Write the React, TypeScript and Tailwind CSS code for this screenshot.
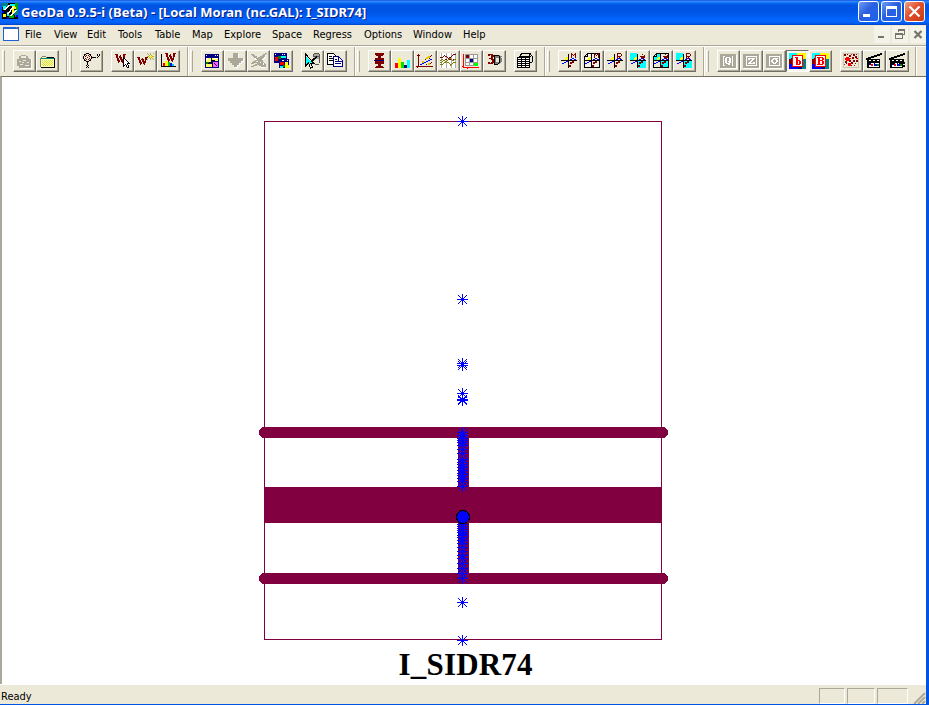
import React from "react";

type Shape = { d: string; c: string; w?: number };

/* Strokes and fills share the 23 x 22 grid of a toolbar button. */
function Ink({ d, c, w = 1 }: Shape) {
  return <path d={d} stroke={c} strokeWidth={w} fill="none" />;
}

function Fill({ d, c }: { d: string; c: string }) {
  return <path d={d} fill={c} />;
}

/* Draws a one-colour bitmap whose marked cells are "#". */
function Bits({ x, y, c, rows }: { x: number; y: number; c: string; rows: string[] }) {
  const d = rows
    .flatMap((row, j) => [...row].map((cell, i) => (cell === "#" ? `M${x + i} ${y + j}h1v1h-1z` : "")))
    .join("");
  return <path d={d} fill={c} />;
}

const MAROON = "#800000";
const NAVY = "#000080";
const GRAY = "#aca899";

const bigW = [
  "###.....###",
  ".##..#..##.",
  ".##.##..##.",
  ".##.###.##.",
  "..##.##.#..",
  "..##.####..",
  "..###.###..",
  "...##.##...",
  "...#...#...",
];

function Dots({ at, c, s = 1 }: { at: number[][]; c: string; s?: number }) {
  return (
    <>
      {at.map(([x, y]) => (
        <rect key={x + "-" + y} x={x} y={y} width={s} height={s} fill={c} />
      ))}
    </>
  );
}

function Axes({ cyan, page, letter }: { cyan?: boolean; page?: boolean; letter?: string }) {
  return (
    <>
      {page && <Fill c={cyan ? "#ece9d8" : "#f4f2e8"} d="M7 4h11v13H4V7z" />}
      {cyan && <Fill c="#0ff" d={page ? "M7 4h3v6H4V7zM11 11h7v6h-7z" : "M3 3h7v7H3zM11 11h8v7h-8z"} />}
      {page && <Bits x={3} y={3} c="#000" rows={[
        "...#############",
        "..##...........#",
        ".#.#...........#",
        "####...........#",
        "#..............#",
        "#..............#",
        "#..............#",
        "#..............#",
        "#..............#",
        "#..............#",
        "#..............#",
        "#..............#",
        "#..............#",
        "#..............#",
        "################",
      ]} />}
      <Fill c="#000" d="M3 10h16v1H3zM10 4h1v14h-1z" />
      <Fill c="#00f" d="M4 13h2v1H4zM6 12h2v1H6zM8 11h2v1H8zM12 9h2v1h-2zM14 8h2v1h-2zM16 9h2v1h-2z" />
      <Dots at={[[12, 12], [14, 11], [11, 15]]} c={MAROON} s={2} />
      <Dots at={[[8, 7], [7, 8]]} c="#ff0" s={2} />
      {letter === "M" && <Bits x={13} y={3} c={MAROON} rows={["#...#", "##.##", "#.#.#", "#...#", "#...#"]} />}
      {letter === "R" && <Bits x={13} y={3} c={MAROON} rows={["####.", "#...#", "#...#", "####.", "#.#..", "#..#."]} />}
      {!letter && (
        <>
          <Dots at={[[15, 4], [17, 5], [13, 6], [16, 8]]} c={MAROON} />
          <Dots at={[[14, 6], [16, 6]]} c={MAROON} s={2} />
        </>
      )}
    </>
  );
}

function Patches({ letter }: { letter: string }) {
  return (
    <>
      <Fill c="#0ff" d="M3 3h9v7H3z" />
      <Fill c="#ff0" d="M11 3h9v7h-4l-5-3z" />
      <Fill c="#008080" d="M15 9h5v10h-8z" />
      <Fill c="#00f" d="M3 14h9l2 5H3z" />
      <Fill c={MAROON} d="M3 9l4-1v6H3z" />
      <Fill c={NAVY} d="M12 16h4v3h-4z" />
      <rect x="6.5" y="5.5" width="10" height="11" fill="#fff" stroke="red" />
      {letter === "b" ? (
        <Bits x={9} y={7} c="red" rows={["###...", ".##...", ".##...", ".####.", ".##.##", ".##.##", ".##.##", ".####."]} />
      ) : (
        <Bits x={8} y={7} c="red" rows={["######.", ".##..##", ".##..##", ".#####.", ".##..##", ".##..##", ".##..##", "######."]} />
      )}
    </>
  );
}

function Clapper({ many }: { many?: boolean }) {
  return (
    <>
      <Fill c="#000" d="M3 8h2V7h3V6h3V5h3V4h3V3h2v2h-2v1h-3v1h-3v1H8v2H5V10H3zM4 9h13v9H4z" />
      <Fill c="#fff" d="M6 10h2v1H6zM10 10h2v1h-2zM14 10h2v1h-2zM6 13h10v4H6z" />
      <Fill c={NAVY} d="M6 13h2v2H6zM11 13h1v3h-1z" />
      <Dots at={[[8, 14]]} c="red" s={2} />
      <Dots at={[[12, 14]]} c="#00f" s={2} />
      <Dots at={[[14, 14]]} c="#008000" s={2} />
      {many && <Fill c="#000" d="M15 9h3v1h-3zM17 10h1v4h-1zM13 12h6v2h-6zM5 12h4v2H5zM16 15h3v2h-3z" />}
    </>
  );
}

const glyphs: Record<string, React.ReactNode> = {
  openGray: (
    <>
      <Fill c="#fff" d="M6 7h9v2h4v10H8l-3-4z" />
      <Fill c={GRAY} d="M8 5h5v1H8zM6 6h2v2H6zM13 6h2v2h-2zM4 9h2V8h10v1h2v9H6v-2H4z" />
      <Fill c="#ece9d8" d="M8 7h4v1H8zM6 11h2v1H6zM10 10h3v1h-3zM14 12h2v1h-2zM7 14h3v1H7zM12 15h4v1h-4zM9 12h2v1H9z" />
    </>
  ),
  folder: (
    <>
      <Fill c="#808080" d="M4 8h1v9H4zM5 7h1v1H5zM6 6h4v1H6zM10 7h1v1h-1z" />
      <Fill c="#ffff9c" d="M5 9h13v8H5zM6 7h4v2H6z" />
      <Bits x={6} y={10} c="#d8d860" rows={["#.#.#.#.#.#", ".#.#.#.#.#.", "#.#.#.#.#.#", ".#.#.#.#.#.", "#.#.#.#.#.#", ".#.#.#.#.#."]} />
      <Fill c="#008080" d="M5 8h13v1H5z" />
      <Fill c="#000" d="M11 7h7v1h-7zM18 8h1v10H5v-1h13z" />
    </>
  ),
  coordinate: (
    <>
      <Bits x={3} y={3} c="#000" rows={[
        "...###...........",
        ".##...##......#.#",
        ".#.....#......#.#",
        "#.......#......#.",
        "#...#...#####.#..",
        "#.......#........",
        ".#.....#.........",
        ".##...##.........",
        "...###...........",
        "....#............",
        "....#............",
        "....#............",
        "...#.#...........",
        "....#............",
        "...#.#...........",
      ]} />
      <Bits x={5} y={5} c={MAROON} rows={[".#.#.", "#...#", "..#..", "#...#", ".#.#."]} />
    </>
  ),
  weightSelect: (
    <>
      <Bits x={4} y={4} c={MAROON} rows={bigW} />
      <Pointer />
    </>
  ),
  weightNew: (
    <>
      <Bits x={3} y={7} c={MAROON} rows={bigW.filter((_, i) => i !== 2)} />
      <Bits x={13} y={3} c="#aaa67e" rows={["#..#..#", ".#.#.#.", "..#.#..", "##...##", "..#.#..", ".#.#.#.", "#..#..#"]} />
      <Fill c="#ff0" d="M15 6h3v1h-3zM16 5h1v3h-1zM18 4h1v1h-1zM19 7h1v1h-1zM14 8h1v1h-1z" />
    </>
  ),
  weightHistogram: (
    <>
      <Fill c="#000" d="M4 4h1v12h14v1H4z" />
      <Fill c="red" d="M6 13h2v3H6z" />
      <Fill c="#ff0" d="M8 11h3v5H8z" />
      <Fill c="#0c0" d="M11 12h2v4h-2z" />
      <Fill c="#00f" d="M13 13h2v3h-2z" />
      <Fill c="#0cf" d="M15 14h2v2h-2z" />
      <Bits x={8} y={3} c={MAROON} rows={bigW} />
    </>
  ),
  map: (
    <>
      <Fill c={NAVY} d="M4 4h14v14H4z" />
      <Fill c="#fff" d="M5 5h1v1H5zM14 5h1v1h-1zM16 5h1v1h-1z" />
      <Fill c="#ff6" d="M5 8h5v4H5zM11 8h6v3h-6zM5 14h6v3H5z" />
      <Fill c="#fff" d="M13 8h4v1h-4zM5 8h2v2H5z" />
      <Fill c="#008000" d="M5 12h3v2H5z" />
      <Bits x={12} y={12} c="#ff60ff" rows={["#####", "#.###", "##.##", "###.#", "#####"]} />
      <Fill c="#000" d="M8 12h3v1H8zM11 10h3v1h-3zM7 13h1v1H7zM11 12h1v5h-1z" />
    </>
  ),
  down: (
    <>
      <Fill c="#fff" d="M14 4h1v5h5v3h-2v2h-2v2h-2v2h-3v-2h2z" />
      <Fill c={GRAY} d="M9 3h5v5h5v3h-2v2h-2v2h-2v2h-3v-2H8v-2H6v-2H4V8h5z" />
    </>
  ),
  plane: (
    <>
      <Fill c="#fff" d="M6 6l4 3h3l6-4v2l-3 4 2 3v4h-4z" />
      <Bits x={4} y={3} c={GRAY} rows={[
        "..............##",
        "###.........###.",
        ".###.......###..",
        "..####...#####..",
        "...###.######...",
        ".....#######....",
        "......#####.....",
        "....########....",
        "..###..#####....",
        ".########.###...",
        "###...######.#..",
        "....########.##.",
        "..####..#######.",
        "###.......#####.",
      ]} />
    </>
  ),
  twoMaps: (
    <>
      <Fill c={NAVY} d="M4 3h13v10H4zM9 9h10v9H9z" />
      <Fill c="#fff" d="M5 4h1v1H5zM12 4h1v1h-1zM14 4h1v1h-1zM12 10h2v1h-2zM17 10h1v1h-1z" />
      <Fill c="red" d="M5 7h3v4H5zM10 12h4v3h-4z" />
      <Fill c="#008000" d="M8 6h3v3H8zM13 15h2v2h-2z" />
      <Fill c="#0ff" d="M11 6h5v2h-5zM10 16h3v2h-3z" />
      <Fill c="#ff0" d="M15 12h3v3h-3zM15 15h4v3h-4z" />
    </>
  ),
  selectData: (
    <>
      <Fill c="#0ff" d="M5 6l6 7H8l-3 3z" />
      <Ink c="#000" d="M4.5 4v12l3-3 2 5 2-1-2-4h3zM10 12l7-8" />
      <Fill c="#aaa79c" d="M13 4h5v5h-5z" />
      <Fill c="#555" d="M13 3h5v1h-5zM12 4h1v3h-1zM18 4h1v9h-1zM13 6h5v1h-5zM14 14h4v1h-4z" />
      <Fill c="#000" d="M11 10l5-4v1l-4 5z" />
    </>
  ),
  copy: (
    <>
      <Fill c="#fff" d="M4 4h6l3 3v8H4z" />
      <Ink c="#000" d="M3.5 3.5h6l3 3v8h-9zM5 6.5h3M5 8.5h5M5 10.5h5" />
      <Fill c="#fff" d="M9 7h6l3 3v7H9z" />
      <Ink c={NAVY} d="M9.5 6.5h5l4 4v6h-9zM14.5 7v4h4M11 9.5h2M11 11.5h5M11 13.5h6" />
    </>
  ),
  box: (
    <>
      <Fill c={MAROON} d="M7 3h9v2h-1v1h-2v2h3v6h-3v2h2v1h1v1H7v-1h1v-1h2v-2H7V8h3V6H8V5H7z" />
      <Fill c={NAVY} d="M6 10h10v1H6z" />
    </>
  ),
  histogram: (
    <>
      <Fill c="red" d="M4 13h3v5H4z" />
      <Fill c="#ff0" d="M7 8h3v10H7z" />
      <Fill c="#00e000" d="M10 12h3v6h-3z" />
      <Fill c={NAVY} d="M13 15h3v3h-3z" />
      <Fill c="#0ff" d="M16 10h3v8h-3z" />
    </>
  ),
  scatter: (
    <>
      <Fill c={MAROON} d="M4 4h1v12h14v1H4v1H3v-1H2v-1h2zM3 5h3v1H3z" />
      <Fill c="#00f" d="M6 14h2v1H6zM8 13h2v1H8zM10 12h2v1h-2zM12 11h2v1h-2zM14 10h2v1h-2zM16 9h2v1h-2z" />
      <Dots at={[[8, 11], [12, 7], [14, 6], [14, 13]]} c="#e0c800" s={2} />
      <Dots at={[[11, 9], [16, 6], [17, 5], [17, 12], [12, 14], [15, 8], [16, 13]]} c={MAROON} />
    </>
  ),
  parallel: (
    <>
      <Fill c="#fff" d="M3 3h16v15H3z" />
      <Fill c="#aaa" d="M4 3h1v15H4zM9 3h1v15H9zM14 3h1v15h-1zM18 3h1v15h-1z" />
      <Bits x={3} y={4} c={MAROON} rows={[
        ".............###",
        "....#.......#...",
        "...#.##....#....",
        "###....#.##.....",
        "........#.......",
        ".....##..##..###",
        "....#.......#...",
      ]} />
      <Bits x={3} y={7} c="#808000" rows={[
        "................",
        ".........##.....",
        ".##.....#..#..##",
        "#..##..#....##..",
        "..#..##.........",
        "##..##.##....###",
        "...#.....#..#...",
        "###.......##....",
        "..........#.....",
      ]} />
    </>
  ),
  conditional: (
    <>
      <Fill c="#fff" d="M5 4h13v12H5z" />
      <Ink c="#999" d="M5.5 4.5h12v11h-12zM9.5 4v12M13.5 4v12M5 8.5h13M5 12.5h13" />
      <Fill c={MAROON} d="M6 5h3v3H6z" />
      <Fill c={NAVY} d="M10 9h3v3h-3z" />
      <Fill c="#0f0" d="M14 13h4v3h-4z" />
      <Fill c="red" d="M3 4h1v13h15v1H8v1H7v-1H3v-1H2v-1h1z" />
    </>
  ),
  cube: (
    <>
      <Bits x={12} y={5} c="#808080" rows={["#####..", "#######", "######.", "#....##", "#....##", "#....##", "#....##", "######.", "#####.."]} />
      <Bits x={11} y={5} c="#000" rows={["#####.", "#....#", "#....#", "#....#", "#....#", "#....#", "#....#", "#....#", "#...#.", "####.."]} />
      <Bits x={5} y={4} c={MAROON} rows={["#####.", "##.###", "...###", "...##.", ".####.", "...###", "....##", "....##", "##.###", "#####."]} />
    </>
  ),
  table: (
    <>
      <Bits x={3} y={3} c="#000" rows={[
        "....##########..",
        "...##.......##..",
        "...#........#.#.",
        "..############.#",
        "#############..#",
        "#...#...#...#..#",
        "#############..#",
        "#...#...#...#..#",
        "#############..#",
        "#...#...#...###.",
        "#############...",
        "#...#...#...#...",
        "#############...",
        "#...#...#...#...",
        "#############...",
      ]} />
      <Fill c="#fff" d="M4 8h3v1H4zM8 8h3v1H8zM12 8h3v1h-3zM4 10h3v1H4zM8 10h3v1H8zM12 10h3v1h-3zM4 12h3v1H4zM8 12h3v1H8zM12 12h3v1h-3zM4 14h3v1H4zM8 14h3v1H8zM12 14h3v1h-3zM4 16h3v1H4zM8 16h3v1H8zM12 16h3v1h-3z" />
    </>
  ),
  moran: <Axes letter="M" />,
  moranPage: <Axes page letter="M" />,
  moranRate: <Axes letter="R" />,
  lisa: <Axes cyan />,
  lisaPage: <Axes cyan page />,
  lisaRate: <Axes cyan letter="R" />,
  quantile: (
    <>
      <Fill c="#fff" d="M4 5h16v14H4z" />
      <Fill c={GRAY} d="M3 4h16v14H3z" />
      <Bits x={6} y={6} c="#fff" rows={[
        "##.......#",
        "#..####..#",
        "#.##..##.#",
        "#.##..##.#",
        "#.##..##.#",
        "#.##.###.#",
        "#.##..##.#",
        "#..####..#",
        "#....##..#",
        "##.......#",
      ]} />
    </>
  ),
  percentile: (
    <>
      <Fill c="#fff" d="M4 5h16v14H4z" />
      <Fill c={GRAY} d="M3 4h16v14H3z" />
      <Bits x={6} y={6} c="#fff" rows={[
        "###########",
        "#.........#",
        "#.#######.#",
        "#.##..##..#",
        "#....##...#",
        "#...##....#",
        "#..##..##.#",
        "#.#######.#",
        "#.........#",
        "###########",
      ]} />
    </>
  ),
  sigma: (
    <>
      <Fill c="#fff" d="M4 5h16v14H4z" />
      <Fill c={GRAY} d="M3 4h16v14H3z" />
      <Bits x={6} y={6} c="#fff" rows={[
        "###########",
        "#.........#",
        "#...#####.#",
        "#..##.##..#",
        "#.##...##.#",
        "#.##...##.#",
        "#..##.##..#",
        "#...###...#",
        "#.........#",
        "###########",
      ]} />
    </>
  ),
  lower: <Patches letter="b" />,
  upper: <Patches letter="B" />,
  points: (
    <>
      <rect x="3.5" y="3.5" width="15" height="14" fill="#ece9d8" stroke="#c9c5b5" />
      <Dots at={[[4, 4], [9, 5], [13, 4], [15, 6], [12, 7], [5, 11], [9, 10], [13, 10], [16, 10], [11, 12]]} c={MAROON} s={2} />
      <Dots at={[[7, 4], [16, 4], [6, 13], [15, 13], [11, 15], [17, 8]]} c={MAROON} />
      <Fill c="red" d="M6 7h3v1h1v2H9v1H6v-1H5V8h1zM8 13h3v3H8z" />
      <Dots at={[[4, 14], [14, 15], [11, 4], [10, 8], [16, 8]]} c="red" />
    </>
  ),
  movie: <Clapper />,
  movies: <Clapper many />,
};

function Pointer() {
  return (
    <>
      <Fill c="#fff" d="M13 8h2l4 5v2h-2l1 3h-2l-1-2-2 1z" />
      <Bits x={12} y={7} c="#000" rows={["#......", "##.....", "#.#....", "#..#...", "#...#..", "#....#.", "#...###", "#.#.#..", "##.#.#.", "#..#.#.", "....##."]} />
    </>
  );
}

function ToolButton({ name, pressed }: { name: string; pressed?: boolean }) {
  return (
    <button
      aria-label={name}
      className={
        "h-[22px] w-[23px] shrink-0 border " +
        (pressed
          ? "border-t-[#716f64] border-l-[#716f64] border-r-white border-b-white bg-[#f7f5ee]"
          : "border-t-white border-l-white border-r-[#716f64] border-b-[#716f64] bg-[#ece9d8] shadow-[inset_-1px_-1px_0_#aca899]")
      }
    >
      <svg viewBox="0 0 23 22" shapeRendering="crispEdges" className="-mt-px -ml-px block h-[22px] w-[23px] max-w-none">
        {glyphs[name]}
      </svg>
    </button>
  );
}

type Band = { width: string; groups: string[][] };

const bands: Band[] = [
  { width: "w-[64px]", groups: [["openGray", "folder"]] },
  { width: "w-[118px]", groups: [["coordinate"], ["weightSelect", "weightNew", "weightHistogram"]] },
  { width: "w-[164px]", groups: [["map", "down", "plane", "twoMaps"], ["selectData", "copy"]] },
  { width: "w-[187px]", groups: [["box", "histogram", "scatter", "parallel", "conditional", "cube"], ["table"]] },
  { width: "w-[156px]", groups: [["moran", "moranPage", "moranRate", "lisa", "lisaPage", "lisaRate"]] },
  { width: "w-[209px]", groups: [["quantile", "percentile", "sigma", "lower", "upper"], ["points", "movie", "movies"]] },
];

const menus = [
  ["File", "w-[29px]"],
  ["View", "w-[33px]"],
  ["Edit", "w-[31px]"],
  ["Tools", "w-[37px]"],
  ["Table", "w-[37px]"],
  ["Map", "w-[32px]"],
  ["Explore", "w-[48px]"],
  ["Space", "w-[41px]"],
  ["Regress", "w-[51px]"],
  ["Options", "w-[49px]"],
  ["Window", "w-[50px]"],
  ["Help", "w-[40px]"],
];

function TitleBar() {
  const frame = "flex size-[21px] items-center justify-center rounded-[3px] border border-white ";
  return (
    <header className="flex h-[25px] shrink-0 items-start bg-[linear-gradient(#0831d9_0,#3a93ff_1px,#0a6cf0_3px,#0054e3_5px,#0055e5_12px,#0366ff_20px,#0360f5_23px,#0041c4_25px)] pr-[4px] pl-[2px]">
      <svg viewBox="0 0 16 16" shapeRendering="crispEdges" className="mt-[3px] size-4">
        <Fill c="#000" d="M0 0h16v16H0z" />
        <Fill c="#008080" d="M0 0h6v4H0zM11 7h5v7h-3z" />
        <Fill c="#0ff" d="M1 3h3v4H1zM8 1h5v2H8zM5 9h2v4H5z" />
        <Fill c="#ff0" d="M10 3h5v3h-3v4h-2zM1 11h3v3H1z" />
        <Fill c="#0a0" d="M13 0h3v7h-2zM7 12h5v3H7z" />
        <Ink c="#fff" w={1.5} d="M3 7l4-5M6 11l5-7M9 13l5-6" />
        <Dots at={[[0, 8], [5, 14], [14, 12]]} c="#00f" s={2} />
      </svg>
      <h1 className="ml-[3px] flex-1 font-['Noto_Sans','Open_Sans',sans-serif] text-[13px] leading-[25px] font-bold tracking-[0.04px] whitespace-pre text-white [text-shadow:1px_1px_0_#0a1883]">
        GeoDa 0.9.5-i (Beta) - [Local Moran (nc.GAL): I_SIDR74]
      </h1>
      <div className="flex gap-[2px] pt-px">
        <button aria-label="Minimize" className={frame + "bg-[linear-gradient(135deg,#6f9bf5,#2a5fe0_45%,#1c63ef)]"}>
          <svg viewBox="0 0 19 19" className="size-[19px]"><Fill c="#fff" d="M4 12h7v3H4z" /></svg>
        </button>
        <button aria-label="Maximize" className={frame + "bg-[linear-gradient(135deg,#6f9bf5,#2a5fe0_45%,#1c63ef)]"}>
          <svg viewBox="0 0 19 19" className="size-[19px]" shapeRendering="crispEdges">
            <Ink c="#fff" d="M4.5 5v9.5h10V5" />
            <Fill c="#fff" d="M4 4h11v3H4z" />
          </svg>
        </button>
        <button aria-label="Close" className={frame + "bg-[linear-gradient(135deg,#f0a088,#e0502c_45%,#c83a14)]"}>
          <svg viewBox="0 0 19 19" className="size-[19px]"><Ink c="#fff" w={2.2} d="M4.5 4.5l10 10M14.5 4.5l-10 10" /></svg>
        </button>
      </div>
    </header>
  );
}

function MenuBar() {
  const small = "flex h-[17px] w-4 items-center justify-center bg-[#f4f3ea] text-[#77756b]";
  return (
    <nav className="flex h-5 shrink-0 items-start">
      <svg viewBox="0 0 16 14" shapeRendering="crispEdges" className="mt-[2px] ml-[3px] h-[14px] w-4 shrink-0">
        <rect x="0.5" y="0.5" width="15" height="13" fill="#fff" stroke="#1c63d8" />
        <Fill c="#1c63d8" d="M0 0h16v2H0z" />
        <Fill c="#e86b3a" d="M13 0h1v1h-1z" />
      </svg>
      <div className="flex flex-1 pl-[6px] leading-[19px]">
        {menus.map(([label, width]) => (
          <span key={label} className={width}>{label}</span>
        ))}
      </div>
      <div className="flex gap-[2px] pt-px">
        <button aria-label="Minimize document" className={small}>
          <svg viewBox="0 0 16 17" className="h-[17px] w-4"><Fill c="currentColor" d="M4 10h6v2H4z" /></svg>
        </button>
        <button aria-label="Restore document" className={small}>
          <svg viewBox="0 0 16 17" className="h-[17px] w-4" shapeRendering="crispEdges">
            <Ink c="currentColor" d="M6 6V3.5h6.5v5H10M4 7.5h6.5V12.5h-7V7M6 4.5h7M4 8.5h6" />
          </svg>
        </button>
        <button aria-label="Close document" className={small}>
          <svg viewBox="0 0 16 17" className="h-[17px] w-4"><Ink c="currentColor" w={2.2} d="M4.5 5l7 7M11.5 5l-7 7" /></svg>
        </button>
      </div>
    </nav>
  );
}

function Toolbar() {
  return (
    <div className="flex h-[31px] shrink-0 border-t border-[#aca899] shadow-[inset_0_1px_0_#fff]">
      <div className="w-[2px] shrink-0" />
      {bands.map((band, i) => (
        <div key={i} className="flex shrink-0">
          <div className={"flex items-start gap-2 pt-1 " + band.width}>
            <span className="h-[22px] w-[3px] shrink-0 border-t border-r border-l border-t-white border-r-[#aca899] border-l-white" />
            {band.groups.map((group, g) => (
              <div key={g} className="flex">
                {group.map((name) => (
                  <ToolButton key={name} name={name} pressed={name === "lower"} />
                ))}
              </div>
            ))}
          </div>
          <span className="mt-px h-[29px] w-[2px] border-r border-l border-r-white border-l-[#aca899]" />
          <span className="w-px" />
        </div>
      ))}
    </div>
  );
}

const observations = [
  121, 299, 363, 365, 393, 399, 400, 432, 435, 438, 440, 442, 445, 449, 453, 459, 462, 464, 467, 470, 473, 475, 478,
  481, 486, 524, 526, 528, 530, 532, 535, 537, 540, 543, 547, 551, 555, 558, 563, 568, 573, 578, 602, 640,
];

function BoxPlot() {
  return (
    <svg viewBox="2 77 924 607" className="block h-[607px] w-[924px]" shapeRendering="crispEdges">
      <rect x="264.5" y="121.5" width="397" height="518" fill="none" stroke="#800040" />
      <rect x="458" y="433" width="11" height="145" fill="#800040" />
      <rect x="264" y="487" width="398" height="36" fill="#800040" />
      <path d="M264.5 432.5h398M264.5 578.5h398" stroke="#800040" strokeWidth="11" strokeLinecap="round" />
      {observations.map((y) => (
        <g key={y} transform={`translate(457 ${y - 5})`} fill="#00f">
          <path d="M0 5h11v1H0zM5 0h1v11H5zM4 4h3v3H4z" />
          <path d="M1 1h1v1H1zM2 2h1v1H2zM3 3h1v1H3zM9 1h1v1H9zM8 2h1v1H8zM7 3h1v1H7zM3 7h1v1H3zM2 8h1v1H2zM1 9h1v1H1zM7 7h1v1H7zM8 8h1v1H8zM9 9h1v1H9z" />
        </g>
      ))}
      <circle cx="463" cy="517" r="6.5" fill="#00f" stroke="#000" />
      <text x="398.5" y="675" className="font-['Liberation_Serif',serif] text-[31px] font-bold" textLength="134">
        I_SIDR74
      </text>
    </svg>
  );
}

function StatusBar() {
  const pane = "h-4 border border-t-[#aca899] border-l-[#aca899] border-r-white border-b-white";
  return (
    <footer className="flex h-5 shrink-0 items-start border-t border-white pt-[3px]">
      <span className="flex-1 pl-px leading-[17px]">Ready</span>
      <div className="flex gap-[2px]">
        <span className={pane + " w-[26px]"} />
        <span className={pane + " w-[28px]"} />
        <span className={pane + " w-[31px]"} />
      </div>
      <svg viewBox="0 0 18 16" className="h-4 w-[18px]">
        <Ink c="#fff" d="M5 16L17 4M9 16l8-8M13 16l4-4" />
        <Ink c="#aca899" w={2} d="M6 16L17 5M10 16l7-7M14 16l3-3" />
      </svg>
    </footer>
  );
}

export default function App() {
  return (
    <div className="flex h-[705px] w-[929px] flex-col overflow-hidden bg-[#0054e3] font-['DejaVu_Sans_Condensed','DejaVu_Sans',sans-serif] text-[11px] text-black">
      <TitleBar />
      <div className="mr-[3px] flex min-h-0 flex-1 flex-col bg-[#ece9d8]">
        <MenuBar />
        <Toolbar />
        <main className="min-h-0 flex-1 overflow-hidden border-t border-l-2 border-[#716f64] border-l-[#aca899] bg-white">
          <BoxPlot />
        </main>
        <StatusBar />
      </div>
      <div className="h-px shrink-0 bg-[#0054e3]" />
    </div>
  );
}
